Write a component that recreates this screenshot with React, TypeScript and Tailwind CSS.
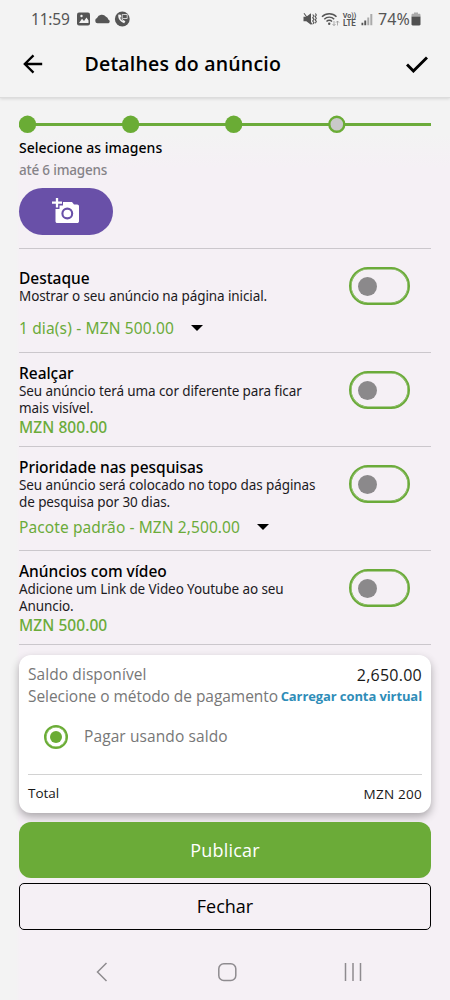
import React, { useState } from "react";

const SANS = "font-['Noto_Sans','Open_Sans',sans-serif]";
const ROUND = "font-['Open_Sans','Noto_Sans',sans-serif]";

const options = [
  {
    id: "destaque",
    title: "Destaque",
    lines: ["Mostrar o seu anúncio na página inicial."],
    price: "1 dia(s) - MZN 500.00",
    select: true,
    rowClass: "h-[104px]",
    textClass: "pt-5",
    selectClass: "mt-[12px] tracking-[0.14px]",
  },
  {
    id: "realcar",
    title: "Realçar",
    lines: ["Seu anúncio terá uma cor diferente para ficar", "mais visível."],
    price: "MZN 800.00",
    select: false,
    rowClass: "h-[94px]",
    textClass: "pt-[11px]",
    selectClass: "",
  },
  {
    id: "prioridade",
    title: "Prioridade nas pesquisas",
    lines: ["Seu anúncio será colocado no topo das páginas", "de pesquisa por 30 dias."],
    price: "Pacote padrão - MZN 2,500.00",
    select: true,
    rowClass: "h-[104px]",
    textClass: "pt-[11px]",
    selectClass: "mt-[6px] tracking-[0.09px]",
  },
  {
    id: "video",
    title: "Anúncios com vídeo",
    lines: ["Adicione um Link de Video Youtube ao seu", "Anuncio."],
    price: "MZN 500.00",
    select: false,
    rowClass: "h-[94px]",
    textClass: "pt-[11px]",
    selectClass: "",
  },
];

function StatusBar() {
  return (
    <div className="flex h-[38px] items-center pl-[31px] pr-[29px] text-[#555]">
      <span className={`${SANS} text-[15.5px] leading-5 tracking-[-0.2px]`}>11:59</span>
      <svg className="ml-[6px]" width="54" height="16" viewBox="0 0 54 16" fill="currentColor">
        <rect x="1" y="1.5" width="13" height="13" rx="2" />
        <path d="M3 12 6 7.8 8 10l2.500-3.500 2 3V12Z" fill="#f3f3f3" />
        <circle cx="5.5" cy="5" r="1.2" fill="#f3f3f3" />
        <path d="M21.5 12.300a2.700 2.700 0 0 1-.5-5.200 5.200 5.200 0 0 1 9-1.300 4 4 0 0 1 2.300 2.600 2.100 2.100 0 0 1 .2 3.900Z" />
        <circle cx="46.3" cy="8" r="7.4" />
        <path
          d="M42.4 3.6c-.9 3.3 1.8 7.6 5.8 8.6l1.2-2-2-1.3-1 .7c-1.3-.8-2-1.8-2.1-3.1l1-.6-.5-2.2Z"
          fill="#f3f3f3"
        />
        <path d="M47.2 3.5h4v4h-4l-1 1.3V3.5Z" fill="none" stroke="#f3f3f3" strokeWidth="0.8" />
      </svg>
      <div className="ml-auto flex items-center">
        <svg width="72" height="18" viewBox="0 0 72 18" fill="currentColor">
          <path d="M.5 6.7h2.800L8 3.200v11.600l-4.700-3.500H.5Z" />
          <path
            d="M1 3.2 9.2 14.5M9.7 4.5 11 6.1 9.7 7.7 11 9.3 9.7 11l1.3 1.7-1 1.2M12.4 3.500l.9 1.600-1 1.600 1 1.600-1 1.600 1 1.700-1 1.600"
            fill="none"
            stroke="currentColor"
            strokeWidth="1.1"
          />
          <path
            d="M19 6.8c4-4.100 10.500-4.100 14.500 0M21.300 9.200c2.700-2.800 7.200-2.800 9.900 0M23.500 11.500c1.500-1.600 4-1.600 5.500 0"
            fill="none"
            stroke="currentColor"
            strokeWidth="1.4"
          />
          <circle cx="26.2" cy="13.7" r="1.2" />
          <path
            d="M31 11v4.600M29.500 14l1.500 1.600 1.500-1.600M34.500 15.500V11M33 12.600l1.500-1.600 1.500 1.600"
            fill="none"
            stroke="#999"
            strokeWidth="0.8"
          />
          <text
            x="39.8"
            y="8"
            fontSize="7.8"
            fontWeight="700"
            fontFamily="Roboto, sans-serif"
            textLength="13.5"
            lengthAdjust="spacingAndGlyphs"
          >
            Vo))
          </text>
          <text
            x="40"
            y="16"
            fontSize="8.5"
            fontWeight="700"
            fontFamily="Roboto, sans-serif"
            textLength="12.8"
            lengthAdjust="spacingAndGlyphs"
          >
            LTE
          </text>
          <path d="M58.5 12.800h1.800v2.400h-1.800zM61.300 10.500h1.900v4.700h-1.900z" />
          <path d="M64.3 7.500h1.900v7.700h-1.900zM67.300 4h2v11.200h-2z" fill="#aaa" />
        </svg>
        <span className={`${SANS} ml-[3px] text-[16px] leading-5 tracking-[0.1px]`}>74%</span>
        <svg className="ml-[1px]" width="10" height="14" viewBox="0 0 10 14">
          <path d="M3 .5h4v1.300h1.300c.7 0 1.200.5 1.200 1.200v1.500h-9V3c0-.7.5-1.200 1.200-1.200H3Z" fill="#aaa" />
          <path d="M.5 4.500h9v7.800c0 .7-.5 1.200-1.200 1.200H1.700c-.7 0-1.200-.5-1.200-1.200Z" fill="#505050" />
        </svg>
      </div>
    </div>
  );
}

function Header() {
  return (
    <header className="flex h-[59px] items-center pl-[23px] pr-[22px] pb-[7px]">
      <svg width="20" height="20" viewBox="0 0 20 20" fill="none" stroke="#000" strokeWidth="2.3">
        <path d="M19.2 10H2M10.5 1.4 1.800 10l8.700 8.600" />
      </svg>
      <h1
        className={`${ROUND} ml-[41.5px] text-[19.5px] leading-7 font-semibold tracking-[0.2px] whitespace-nowrap text-black`}
      >
        Detalhes do anúncio
      </h1>
      <svg className="ml-auto" width="22" height="17" viewBox="0 0 22 17" fill="none" stroke="#000" strokeWidth="2.9">
        <path d="M1 8.5 7.4 15 21 1.5" />
      </svg>
    </header>
  );
}

function Stepper() {
  return (
    <svg className="shrink-0" width="412" height="18" viewBox="0 0 412 18">
      <path d="M8 9.5H412" stroke="#6bab3a" strokeWidth="2.8" />
      <circle cx="8.5" cy="9.3" r="8.7" fill="#6aac35" />
      <circle cx="111.6" cy="9.3" r="8.7" fill="#6aac35" />
      <circle cx="214.7" cy="9.3" r="8.7" fill="#6aac35" />
      <circle cx="317.8" cy="9.3" r="7.5" fill="#c9c9c9" stroke="#6aac35" strokeWidth="2.4" />
    </svg>
  );
}

function Toggle({ label }: { label: string }) {
  const [on, setOn] = useState(false);
  return (
    <button
      role="switch"
      aria-checked={on}
      aria-label={label}
      onClick={() => setOn(!on)}
      className={`mt-[18px] mr-[21px] flex h-[38px] w-[61px] shrink-0 items-center rounded-full border-2 border-[#6bab3a] px-[7px] shadow-[inset_0_0_0_0.6px_#6bab3a] ${
        on ? "justify-end" : "justify-start"
      }`}
    >
      <span className={`size-[19px] rounded-full ${on ? "bg-[#6aac35]" : "bg-[#8b898b]"}`} />
    </button>
  );
}

function OptionRow({ item }: { item: (typeof options)[number] }) {
  return (
    <section className={`flex items-start justify-between border-b border-[#cbc7cc] ${item.rowClass}`}>
      <div className={`flex flex-col whitespace-nowrap ${item.textClass}`}>
        <h2 className={`${SANS} text-[15.5px] leading-[19px] font-medium tracking-[-0.03px] text-black`}>
          {item.title}
        </h2>
        {item.lines.map((line) => (
          <p key={line} className={`${SANS} text-[13.5px] leading-[16.5px] tracking-[-0.1px] text-[#1c1a1e]`}>
            {line}
          </p>
        ))}
        {item.select ? (
          <button className={`flex items-center gap-[17px] ${item.selectClass}`}>
            <span className={`${SANS} text-[15.5px] leading-[22px] text-[#6bab3a]`}>{item.price}</span>
            <svg width="12" height="6" viewBox="0 0 12 6">
              <path d="M0 0h12L6 6Z" fill="#000" />
            </svg>
          </button>
        ) : (
          <p className={`${SANS} mt-[1px] text-[15.5px] leading-5 font-medium tracking-[0.05px] text-[#6bab3a]`}>
            {item.price}
          </p>
        )}
      </div>
      <Toggle label={item.title} />
    </section>
  );
}

function PaymentCard() {
  return (
    <section
      className={`${ROUND} mt-[9.5px] h-[158px] shrink-0 rounded-xl bg-white px-[9px] pt-[8.5px] whitespace-nowrap shadow-[0_4px_8px_rgba(0,0,0,0.3)]`}
    >
      <div className="flex h-[23px] items-center justify-between text-[15.5px]">
        <span className="tracking-[0.08px] text-[#777]">Saldo disponível</span>
        <span className="text-[16px] leading-[22px] tracking-[0.25px] text-[#181818]">2,650.00</span>
      </div>
      <div className="flex h-[22px] items-center justify-between">
        <span className="text-[15.5px] tracking-[-0.05px] text-[#777]">Selecione o método de pagamento</span>
        <span className="text-[13px] font-bold tracking-[-0.1px] text-[#2f8db8]">Carregar conta virtual</span>
      </div>
      <label className="mt-[17px] flex h-6 items-center gap-4 pl-[16px]">
        <span className="flex size-6 items-center justify-center rounded-full border-2 border-[#6aac35] shadow-[inset_0_0_0_0.5px_#6aac35]">
          <span className="size-3 rounded-full bg-[#6aac35]" />
        </span>
        <span className="text-[15.5px] tracking-[0.1px] text-[#777]">Pagar usando saldo</span>
      </label>
      <div className="mt-[25px] flex h-[38px] items-center justify-between border-t border-[#d2d2d2] text-[13.5px] text-[#181818]">
        <span>Total</span>
        <span className="leading-5 tracking-[0.25px]">MZN 200</span>
      </div>
    </section>
  );
}

function NavBar() {
  return (
    <nav className="flex h-[70px] items-center pt-[13px] pl-[96px]">
      <svg width="268" height="20" viewBox="0 0 268 20" fill="none" stroke="#8e8b8f" strokeWidth="1.5">
        <path d="M10.5 1 1.500 10l9 9" />
        <rect x="122.8" y="1.7" width="17" height="16.7" rx="5" />
        <path d="M249.500 1v18M257 1v18M264.500 1v18" />
      </svg>
    </nav>
  );
}

export default function App() {
  return (
    <div className="flex h-[1000px] w-[450px] flex-col overflow-hidden bg-[#f5f0f5]">
      <div className="z-10 border-b border-[#dcdcdc] bg-[#f3f3f3] shadow-[0_1px_3px_rgba(0,0,0,0.12)]">
        <StatusBar />
        <Header />
      </div>
      <main className="flex h-[832px] flex-col bg-[linear-gradient(90deg,#f3f3f3_16px,transparent_20px),linear-gradient(180deg,#f3f3f3_36px,transparent_70px)] px-[19px] pt-[17px]">
        <Stepper />
        <h2 className={`${SANS} mt-[5px] text-[14px] leading-[20px] font-medium tracking-[0.01px] text-black`}>
          Selecione as imagens
        </h2>
        <p className={`${SANS} mt-[2px] text-[13.5px] leading-5 font-medium tracking-[-0.2px] text-[#858388]`}>
          até 6 imagens
        </p>
        <button
          aria-label="Adicionar imagens"
          className="mt-[7.5px] flex h-[47px] w-[94px] shrink-0 items-center justify-center rounded-full bg-[#6950a8]"
        >
          <svg width="28" height="26" viewBox="0 0 28 26">
            <path
              d="M11 4h9l2 2.500h3.200c1 0 1.800.8 1.800 1.800v14.900c0 1-.8 1.800-1.800 1.800H5.300c-1 0-1.800-.8-1.800-1.800V11h4V7.500H11Z"
              fill="#fff"
            />
            <path d="M5 0v9.500M0 4.700h10" stroke="#fff" strokeWidth="2.3" />
            <circle cx="15.3" cy="15.5" r="4.9" fill="none" stroke="#6950a8" strokeWidth="2.1" />
          </svg>
        </button>
        <div className="mt-[13.5px] shrink-0 border-t border-[#cbc7cc]">
          {options.map((item) => (
            <OptionRow key={item.id} item={item} />
          ))}
        </div>
        <PaymentCard />
        <button
          className={`${ROUND} mt-[9.5px] h-14 shrink-0 rounded-xl bg-[#6bab38] text-[18px] font-medium tracking-[0.2px] text-white`}
        >
          Publicar
        </button>
        <button
          className={`${ROUND} mt-[5px] h-[47px] shrink-0 rounded-[5px] border border-black text-[18px] font-medium text-black`}
        >
          Fechar
        </button>
      </main>
      <div className="bg-[linear-gradient(90deg,#f3f3f3_16px,transparent_20px)]">
        <NavBar />
      </div>
    </div>
  );
}
